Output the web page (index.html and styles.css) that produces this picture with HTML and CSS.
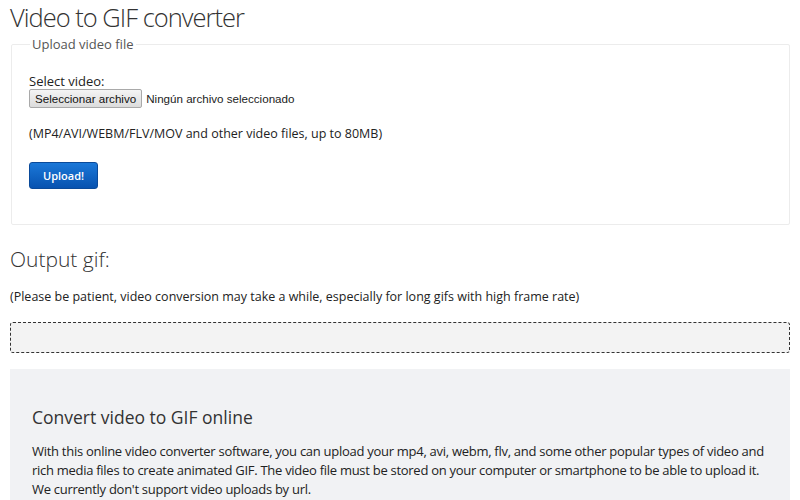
FILE: index.html
```html
<html>
    <head>
    <title>Video to GIF converter</title>
        <link rel="stylesheet" href="styles.css">
    </head>
    <body>
        <div class="page">
            <h1 class="title">Video to GIF converter</h1>

            <form class="upload-form">
                <fieldset class="upload-box">
                    <legend>Upload video file</legend>
                    <label class="field-label" for="videoFile">Select video:</label>
                    <div class="file-row">
                        <span class="file-button">Seleccionar archivo</span>
                        <span class="file-name">Ningún archivo seleccionado</span>
                    </div>
                    <p class="hint">(MP4/AVI/WEBM/FLV/MOV and other video files, up to 80MB)</p>
                    <button type="button" class="upload-button">Upload!</button>
                </fieldset>
            </form>

            <h2 class="output-title">Output gif:</h2>
            <p class="patience">(Please be patient, video conversion may take a while, especially for long gifs with high frame rate)</p>
            <div class="output-box"></div>

            <div class="info">
                <h3>Convert video to GIF online</h3>
                <p>With this online video converter software, you can upload your mp4, avi, webm, flv, and some other popular types of video and rich media files to create animated GIF. The video file must be stored on your computer or smartphone to be able to upload it. We currently don't support video uploads by url.</p>
            </div>
        </div>
    </body>
</html>
```

FILE: styles.css
```css
body {
    margin: 0;
    background: #fff;
    color: #222;
    font-family: "Open Sans", sans-serif;
}

.page {
    padding: 0 10px 0 10px;
}

.title {
    margin: 0;
    padding-top: 2px;
    font-size: 25.5px;
    font-weight: 300;
    letter-spacing: -1px;
    line-height: 30px;
    color: #333;
}

.upload-form {
    margin: 3px 0 0 0;
}

.upload-box {
    margin: 0 0 0 1px;
    padding: 20px 17px 36px 17px;
    border: 1px solid #ececec;
    border-radius: 2px;
    height: 132px;
}

.upload-box legend {
    padding: 0 2px;
    margin-left: 1px;
    font-size: 13px;
    color: #555;
}

.field-label {
    display: block;
    font-size: 13px;
    line-height: 16px;
}

.file-row {
    display: flex;
    align-items: center;
    gap: 4px;
    font-family: "Liberation Sans", Arial, sans-serif;
    font-size: 11.6px;
}

.file-button {
    padding: 2px 5px;
    border: 1px solid #a9a9a9;
    border-radius: 2px;
    background: linear-gradient(#f4f4f4, #dcdcdc);
    color: #111;
}

.hint {
    margin: 17px 0 0 0;
    font-size: 12.5px;
}

.upload-button {
    margin-top: 20px;
    width: 69px;
    height: 27px;
    border: 1px solid #0a4a9a;
    border-radius: 3px;
    background: linear-gradient(#1b78d8, #0752b0);
    color: #fff;
    font-family: "Open Sans", sans-serif;
    font-size: 11px;
    font-weight: 600;
}

.output-title {
    margin: 20px 0 0 0;
    font-size: 21px;
    font-weight: 300;
    color: #333;
}

.patience {
    margin: 15px 0 0 0;
    font-size: 12.5px;
}

.output-box {
    margin-top: 17px;
    height: 29px;
    border: 1px dashed #333;
    border-radius: 3px;
    background: #f3f3f3;
}

.info {
    margin-top: 16px;
    padding: 36px 15px 33px 22px;
    background: #f1f2f4;
}

.info h3 {
    margin: 0;
    font-size: 17.5px;
    font-weight: 400;
    color: #333;
}

.info p {
    margin: 13px 0 0 0;
    font-size: 13px;
    letter-spacing: -0.28px;
    line-height: 19px;
}
```
